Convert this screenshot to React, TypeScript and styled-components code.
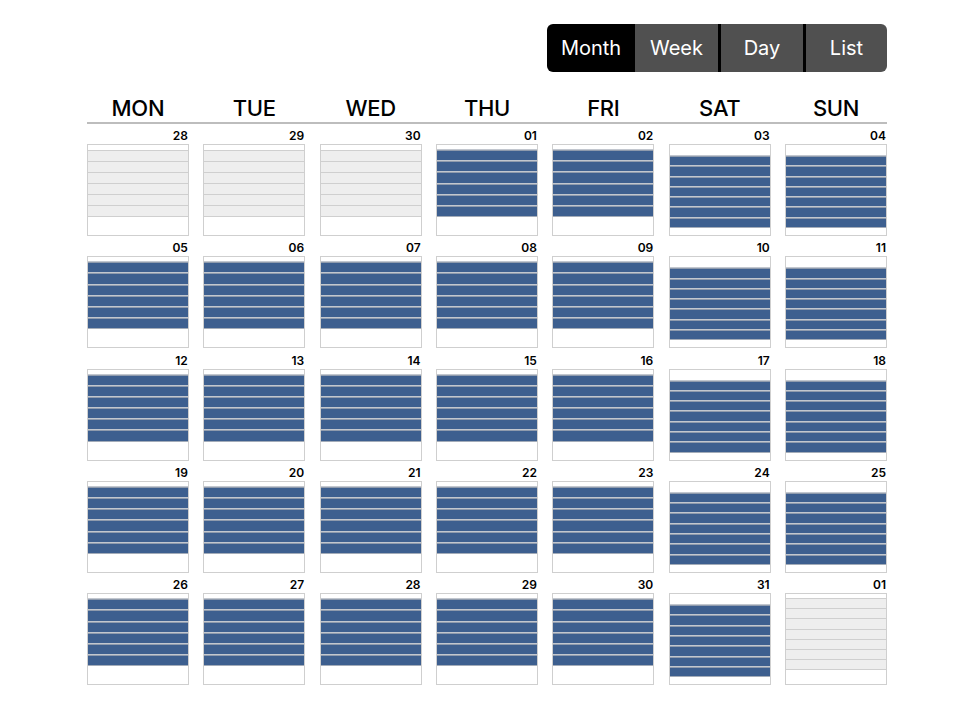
import React from "react";
import styled, { createGlobalStyle } from "styled-components";

const GlobalStyle = createGlobalStyle`
  html, body {
    margin: 0;
    padding: 0;
    background: #ffffff;
  }
  body {
    font-family: Inter, "Noto Sans", "Liberation Sans", sans-serif;
    color: #000;
  }
`;

type Variant = "muted" | "mutedWeekend" | "weekday" | "weekend";

type Day = {
  label: string;
  variant: Variant;
};

const BLUE = "#3d5f8f";

const Page = styled.div`
  width: 800px;
  padding: 24px 0 0 87px;
`;

const Toolbar = styled.div`
  display: flex;
  justify-content: flex-end;
`;

const ButtonGroup = styled.div`
  display: flex;
  height: 48px;
  border-radius: 6px;
  overflow: hidden;
`;

const ViewButton = styled.button<{ $active?: boolean; $width: number; $divider?: boolean }>`
  display: flex;
  align-items: center;
  justify-content: center;
  width: ${(p) => p.$width}px;
  height: 100%;
  padding: 0;
  border: none;
  border-left: ${(p) => (p.$divider ? "3px solid #000" : "none")};
  background: ${(p) => (p.$active ? "#000" : "#505050")};
  color: #fff;
  font-family: Inter, "Noto Sans", sans-serif;
  font-size: 20px;
  font-weight: 400;
  cursor: pointer;
`;

const DayHeader = styled.div`
  display: grid;
  grid-template-columns: repeat(7, 1fr);
  column-gap: 14.5px;
  margin-top: 22px;
  height: 28px;
  border-bottom: 2px solid #bdbdbd;
`;

const DayName = styled.div`
  padding-top: 2px;
  text-align: center;
  font-size: 22px;
  font-weight: 500;
  line-height: 24px;
  letter-spacing: -0.3px;
`;

const Weeks = styled.div`
  display: flex;
  flex-direction: column;
  row-gap: 0.3px;
`;

const WeekRow = styled.div`
  display: grid;
  grid-template-columns: repeat(7, 1fr);
  column-gap: 14.5px;
`;

const DayColumn = styled.div`
  display: flex;
  flex-direction: column;
`;

const DateLabel = styled.div`
  height: 20px;
  box-sizing: border-box;
  padding: 3px 1px 0 0;
  text-align: right;
  font-size: 12px;
  font-weight: 600;
  line-height: 17px;
`;

const paddings: Record<Variant, [number, number]> = {
  muted: [5, 18],
  mutedWeekend: [4, 14],
  weekday: [4, 18],
  weekend: [10, 7],
};

const Cell = styled.div<{ $variant: Variant }>`
  display: flex;
  flex-direction: column;
  height: 92px;
  box-sizing: border-box;
  border: 1px solid #cfcfcf;
  padding-top: ${(p) => paddings[p.$variant][0]}px;
  padding-bottom: ${(p) => paddings[p.$variant][1]}px;
  background: #fff;
`;

const Slots = styled.div`
  flex: 1;
  display: flex;
  flex-direction: column;
`;

const Slot = styled.div<{ $muted: boolean }>`
  flex: 1;
  box-sizing: border-box;
  background: ${(p) => (p.$muted ? "#eeeeee" : BLUE)};
  border-top: 1px solid ${(p) => (p.$muted ? "#cfcfcf" : "#c2c7cf")};
  box-shadow: ${(p) => (p.$muted ? "none" : "inset 0 1px 0 #8f9bad")};

  &:last-child {
    border-bottom: 1px solid ${(p) => (p.$muted ? "#cfcfcf" : "#a3acb9")};
  }
`;

const days = ["MON", "TUE", "WED", "THU", "FRI", "SAT", "SUN"];

const pad = (n: number) => String(n).padStart(2, "0");

const buildWeeks = (): Day[][] => {
  const weeks: Day[][] = [];
  weeks.push([
    { label: "28", variant: "muted" },
    { label: "29", variant: "muted" },
    { label: "30", variant: "muted" },
    { label: "01", variant: "weekday" },
    { label: "02", variant: "weekday" },
    { label: "03", variant: "weekend" },
    { label: "04", variant: "weekend" },
  ]);
  for (let start = 5; start <= 19; start += 7) {
    weeks.push(
      days.map((_, i) => ({
        label: pad(start + i),
        variant: i < 5 ? "weekday" : "weekend",
      }))
    );
  }
  weeks.push([
    { label: "26", variant: "weekday" },
    { label: "27", variant: "weekday" },
    { label: "28", variant: "weekday" },
    { label: "29", variant: "weekday" },
    { label: "30", variant: "weekday" },
    { label: "31", variant: "weekend" },
    { label: "01", variant: "mutedWeekend" },
  ]);
  return weeks;
};

const slotCount = (v: Variant) => (v === "weekend" || v === "mutedWeekend" ? 7 : 6);

const DayCell = ({ day }: { day: Day }) => {
  const muted = day.variant === "muted" || day.variant === "mutedWeekend";
  return (
    <DayColumn>
      <DateLabel>{day.label}</DateLabel>
      <Cell $variant={day.variant}>
        <Slots>
          {Array.from({ length: slotCount(day.variant) }).map((_, i) => (
            <Slot key={i} $muted={muted} />
          ))}
        </Slots>
      </Cell>
    </DayColumn>
  );
};

export default function App() {
  const weeks = buildWeeks();
  return (
    <>
      <GlobalStyle />
      <Page>
        <Toolbar>
          <ButtonGroup>
            <ViewButton $active $width={88}>Month</ViewButton>
            <ViewButton $width={83}>Week</ViewButton>
            <ViewButton $width={85} $divider>Day</ViewButton>
            <ViewButton $width={84} $divider>List</ViewButton>
          </ButtonGroup>
        </Toolbar>
        <DayHeader>
          {days.map((d) => (
            <DayName key={d}>{d}</DayName>
          ))}
        </DayHeader>
        <Weeks>
          {weeks.map((week, wi) => (
            <WeekRow key={wi}>
              {week.map((day, di) => (
                <DayCell key={di} day={day} />
              ))}
            </WeekRow>
          ))}
        </Weeks>
      </Page>
    </>
  );
}
